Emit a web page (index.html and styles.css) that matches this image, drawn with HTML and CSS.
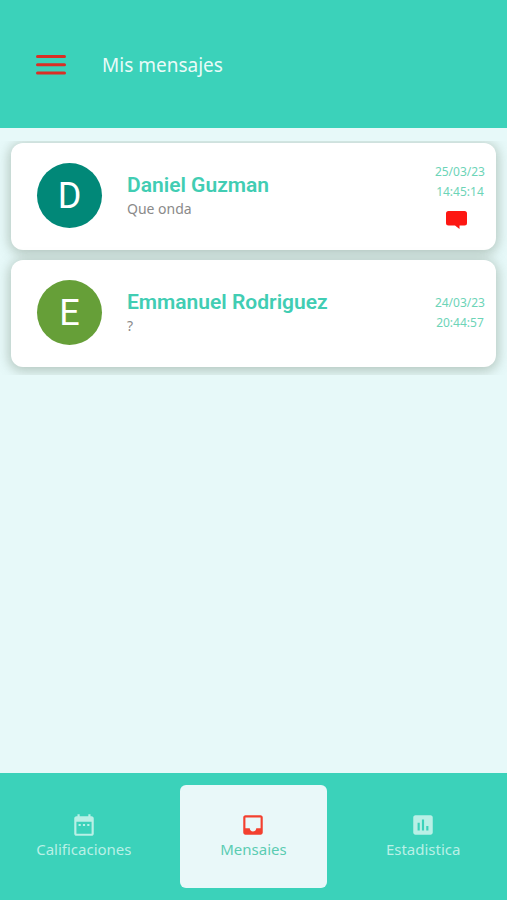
FILE: index.html
```html
<!DOCTYPE html>
<html lang="es">
<head>
<meta charset="utf-8">
<meta name="viewport" content="width=device-width, initial-scale=1">
<title>Mis mensajes</title>
<link rel="stylesheet" href="styles.css">
</head>
<body>
<header class="top-bar">
  <button class="menu-button" type="button" aria-label="Menú">
    <svg width="30" height="22" viewBox="0 0 30 22"><path d="M1.5 2.5h27M1.5 10.8h27M1.5 19.1h27" stroke="#d92f25" stroke-width="3" stroke-linecap="round"/></svg>
  </button>
  <h1 class="title">Mis mensajes</h1>
</header>
<main class="content">
  <ul class="messages">
    <li class="card">
      <span class="avatar avatar-teal">D</span>
      <div class="summary">
        <h2 class="name">Daniel Guzman</h2>
        <p class="preview">Que onda</p>
      </div>
      <div class="meta">
        <time class="stamp">25/03/23<br>14:45:14</time>
        <svg class="unread" width="28" height="18" viewBox="0 0 28 18"><path d="M2.500 0h16Q21 0 21 2.500v9.500q0 2.500-2.500 2.500h-5L13.500 18l-4.500-3.500h-6.500Q0 14.500 0 12V2.500Q0 0 2.500 0z" fill="#fd1712"/></svg>
      </div>
    </li>
    <li class="card">
      <span class="avatar avatar-green">E</span>
      <div class="summary">
        <h2 class="name">Emmanuel Rodriguez</h2>
        <p class="preview">?</p>
      </div>
      <div class="meta">
        <time class="stamp">24/03/23<br>20:44:57</time>
      </div>
    </li>
  </ul>
</main>
<nav class="tabs">
  <a class="tab" href="#calificaciones">
    <svg width="26" height="26" viewBox="0 0 24 24" fill="currentColor"><path d="M9 11H7v2h2zm4 0h-2v2h2zm4 0h-2v2h2zm2-7h-1V2h-2v2H8V2H6v2H5c-1.100 0-2 .9-2 2v14c0 1.100.9 2 2 2h14c1.100 0 2-.9 2-2V6c0-1.100-.9-2-2-2zm0 16H5V9h14z"/></svg>
    <span class="tab-label">Calificaciones</span>
  </a>
  <a class="tab tab-active" href="#mensajes" aria-current="page">
    <svg class="inbox" width="26" height="26" viewBox="0 0 24 24" fill="currentColor"><path d="M19 3H5c-1.100 0-2 .9-2 2v14c0 1.100.9 2 2 2h14c1.100 0 2-.9 2-2V5c0-1.100-.9-2-2-2zm0 12h-4c0 1.660-1.350 3-3 3s-3-1.340-3-3H5V5h14z"/></svg>
    <span class="tab-label">Mensajes</span>
  </a>
  <a class="tab" href="#estadistica">
    <svg width="26" height="26" viewBox="0 0 24 24" fill="currentColor"><path d="M19 3H5c-1.100 0-2 .9-2 2v14c0 1.100.9 2 2 2h14c1.100 0 2-.9 2-2V5c0-1.100-.9-2-2-2zM9 17H7v-7h2zm4 0h-2V7h2zm4 0h-2v-4h2z"/></svg>
    <span class="tab-label">Estadistica</span>
  </a>
</nav>
</body>
</html>
```
FILE: styles.css
```css
* {
  box-sizing: border-box;
}

body {
  margin: 0;
  min-height: 100vh;
  display: flex;
  flex-direction: column;
  background: #e7f9f9;
  font-family: "Noto Sans", "Open Sans", sans-serif;
}

h1, h2, p, ul {
  margin: 0;
  padding: 0;
}

svg {
  display: block;
}

.top-bar {
  display: flex;
  align-items: center;
  gap: 36px;
  padding: 49px 36px 47px;
  background: #3bd2ba;
}

.menu-button {
  padding: 0;
  border: 0;
  background: none;
}

.title {
  color: #e9fbf8;
  font-size: 19px;
  font-weight: 400;
  line-height: 32px;
}

.content {
  flex: 1;
  padding-top: 13px;
}

.messages {
  display: flex;
  flex-direction: column;
  gap: 10px;
  padding: 2px 11px 8px;
  overflow: hidden;
  list-style: none;
}

.card {
  display: flex;
  align-items: center;
  gap: 25px;
  min-height: 107px;
  padding: 18px 11px 20px 26px;
  border-radius: 12px;
  background: #fff;
  box-shadow: 0 2px 12px 2px rgba(90, 110, 90, 0.36);
}

.avatar {
  width: 65px;
  height: 65px;
  border-radius: 50%;
  color: #fff;
  font: 36px/67px Roboto, sans-serif;
  text-align: center;
}

.avatar-teal {
  background: #018878;
}

.avatar-green {
  background: #669f38;
}

.summary {
  flex: 1;
}

.name {
  color: #41cdb3;
  font: 600 21px/26px Roboto, sans-serif;
}

.preview {
  color: #8a8a8a;
  font-size: 14px;
  line-height: 22px;
}

.meta {
  display: flex;
  flex-direction: column;
  align-items: center;
  gap: 9px;
}

.stamp {
  color: #6dd4b7;
  font-size: 12px;
  line-height: 20px;
  text-align: center;
}

.tabs {
  display: grid;
  grid-template-columns: repeat(3, 1fr);
  gap: 22px;
  padding: 12px 10px;
  background: #3bd2ba;
}

.tab {
  display: flex;
  flex-direction: column;
  align-items: center;
  padding: 27px 0 28px;
  border-radius: 6px;
  color: #b9f0e6;
  text-decoration: none;
}

.tab-label {
  font-size: 15px;
  line-height: 22px;
  clip-path: inset(0 0 5px);
}

.tab-active {
  background: #e9f8f9;
  color: #5accb2;
}

.inbox {
  color: #f3402f;
}
```
